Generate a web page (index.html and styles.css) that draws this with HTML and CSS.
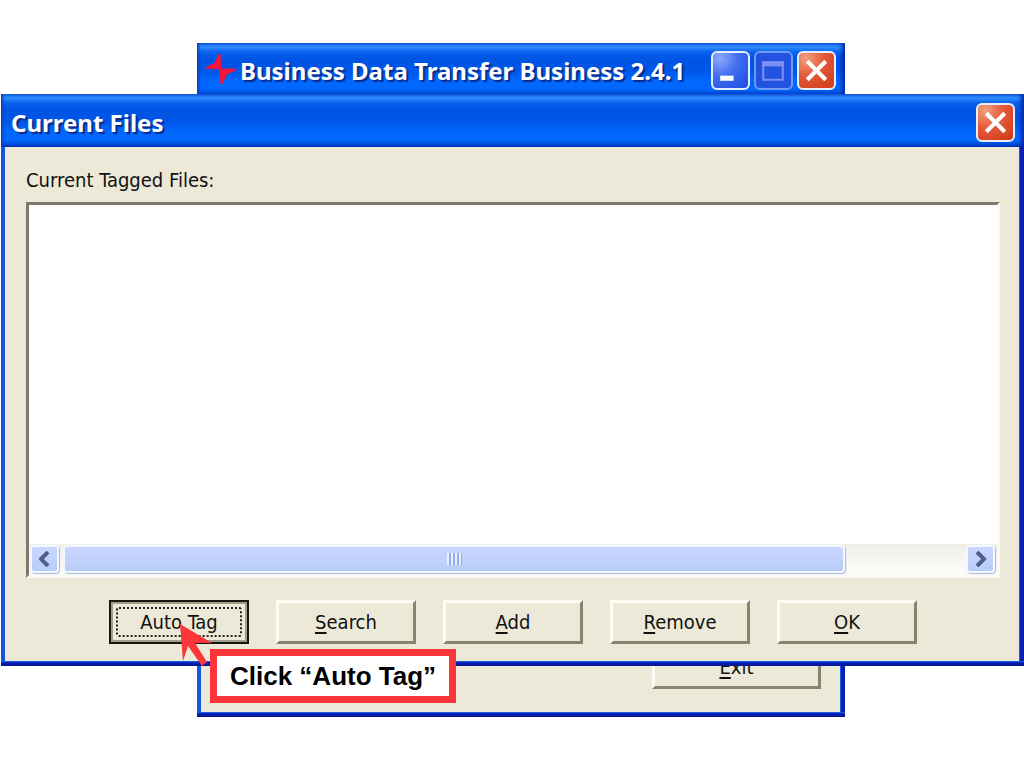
FILE: index.html
```html
<!DOCTYPE html>
<html lang="en">
<head>
  <meta charset="UTF-8" />
  <meta name="viewport" content="width=device-width, initial-scale=1.0"/>
  <title>Business Data Transfer Business 2.4.1</title>
  <link rel="stylesheet" href="styles.css">
</head>
<body>
  <main class="desktop">

    <section class="window main-window">
      <header class="title-bar">
        <svg class="logo" viewBox="0 0 32 32" aria-hidden="true">
          <path d="M0 15 L10 10 L14 1 L16 1 L17 16 L32 16 L32 18 L23 22 L18 32 L16 32 L15 17 L0 16 Z" fill="#f5143c"/>
        </svg>
        <h1>Business Data Transfer Business 2.4.1</h1>
        <button class="caption-btn" aria-label="Minimize">
          <svg viewBox="0 0 34 34"><path d="M7 22h13v5H7z" fill="#fff"/></svg>
        </button>
        <button class="caption-btn disabled" aria-label="Maximize" disabled>
          <svg viewBox="0 0 34 34"><path d="M7 9h19v17H7z" fill="none" stroke="#7a90f4" stroke-width="2"/><path d="M6 8h21v5H6z" fill="#7a90f4"/></svg>
        </button>
        <button class="caption-btn close" aria-label="Close">
          <svg viewBox="0 0 34 34"><path d="M8 8l18 18M26 8L8 26" stroke="#fff" stroke-width="4"/></svg>
        </button>
      </header>
      <div class="window-body main-body">
        <button class="btn exit-btn"><u>E</u>xit</button>
      </div>
    </section>

    <section class="window dialog">
      <header class="title-bar dialog-bar">
        <h2>Current Files</h2>
        <button class="caption-btn close" aria-label="Close">
          <svg viewBox="0 0 34 34"><path d="M8 8l18 18M26 8L8 26" stroke="#fff" stroke-width="4"/></svg>
        </button>
      </header>
      <div class="window-body dialog-body">
        <p class="list-label" id="files-label">Current Tagged Files:</p>
        <div class="list-box">
          <div class="list-items" role="listbox" aria-labelledby="files-label" tabindex="0"></div>
          <div class="scrollbar">
            <button class="scroll-btn" aria-label="Scroll left">
              <svg viewBox="0 0 12 16"><path d="M9 1L2 8l7 7" fill="none" stroke="#4d6185" stroke-width="4"/></svg>
            </button>
            <div class="track">
              <div class="thumb"><span class="grip"></span></div>
            </div>
            <button class="scroll-btn" aria-label="Scroll right">
              <svg viewBox="0 0 12 16"><path d="M2 1l7 7l-7 7" fill="none" stroke="#4d6185" stroke-width="4"/></svg>
            </button>
          </div>
        </div>
        <div class="actions">
          <button class="btn default"><span>Auto Tag</span></button>
          <button class="btn"><u>S</u>earch</button>
          <button class="btn"><u>A</u>dd</button>
          <button class="btn"><u>R</u>emove</button>
          <button class="btn"><u>O</u>K</button>
        </div>
      </div>
    </section>

    <!-- tutorial hint -->
    <svg class="arrow" viewBox="0 0 34 46" aria-hidden="true">
      <path d="M1 1L33 20L16 20L28 39L23 43L9 23L4 38Z" fill="#fb363b"/>
    </svg>
    <div class="callout">Click “Auto Tag”</div>
  </main>
</body>
</html>
```
FILE: styles.css
```css
* { box-sizing:border-box; }
body { margin:0; background:#fff; color:#111; font-family:"DejaVu Sans Condensed","DejaVu Sans",sans-serif; font-size:20px; }
button { font:inherit; color:inherit; padding:0; }
h1, h2 { flex:1; margin:0; color:#fff; font-family:"Noto Sans",sans-serif; font-size:24px; line-height:32px; font-weight:bold; white-space:nowrap; text-shadow:2px 2px 1px #0a2a8c; }

.desktop { position:relative; min-height:100vh; overflow:hidden; }

/* windows */
.window { position:absolute; display:flex; flex-direction:column; background:linear-gradient(90deg, #1456e0 50%, #0a1fb4 50%); }
.window::after { content:""; position:absolute; left:0; right:0; bottom:0; height:5px; background:linear-gradient(#1c5ce4 1px, #0a24c0 1px, #06148c); }
.main-window { top:43px; left:197px; right:179px; height:674px; }
.dialog { top:94px; left:1px; right:0; }

.title-bar { display:flex; align-items:center; gap:9px; height:53px; padding:4px 9px 0 8px;
  background:linear-gradient(#1a6ae8 0, #2f8dff 4px, #0a62ee 9px, #0054e3 16px, #0056e8 28px, #0068ff 38px, #0068ff 46px, #0046d0 51px, #0a36b4 53px);
  box-shadow:inset 3px 0 3px -1px #0940c4, inset -4px 0 4px -1px #0426a8; }
.main-window .title-bar { padding-top:2px; gap:4px; }
.dialog-bar { padding-left:10px; }
.logo { width:31px; height:31px; margin-top:-5px; flex:none; }

.caption-btn { width:39px; height:39px; flex:none; border:2px solid #e8effc; border-radius:6px; background:radial-gradient(circle at 20% 15%, #8fa9fa, #3f6df0 45%, #1c4be0); }
.caption-btn svg { display:block; width:100%; }
.caption-btn.disabled { border-color:#6f9bf8; background:#2153e0; }
.caption-btn.close { background:radial-gradient(circle at 20% 15%, #f0a080, #e4583a 45%, #cc3c12); }

.window-body { flex:1; display:flex; flex-direction:column; margin:0 5px 5px 4px; background:#ece9d8; box-shadow:1px 0 0 #1c5ce4; }
.main-body { align-items:flex-end; justify-content:flex-end; padding:0 19px 23px; }

/* dialog content */
.dialog-body { padding:20px 19px 17px 21px; }
.list-label { margin:0 0 8px; line-height:27px; }
.list-box { display:flex; flex-direction:column; height:376px; border:3px solid; border-color:#7d7a6c #fbfaf2 #fbfaf2 #7d7a6c; background:#fff; }
.list-items { flex:1; outline:none; }
.scrollbar { display:flex; gap:4px; height:31px; padding:1px 2px 1px 1px; background:linear-gradient(#f0eee8, #fdfdfc); }
.scroll-btn, .thumb { border:2px solid #f3f8ff; border-radius:4px; background:linear-gradient(#cad6ff, #b8cdfa); box-shadow:1px 1px 1px #a3b9df; }
.scroll-btn { display:flex; align-items:center; justify-content:center; width:29px; height:28px; flex:none; }
.scroll-btn svg { width:12px; height:16px; }
.track { flex:1; display:flex; }
.thumb { display:flex; align-items:center; justify-content:center; width:87%; height:28px; }
.grip { width:15px; height:12px; background:repeating-linear-gradient(90deg, #eaf0ff 0 2px, #8fadf0 2px 4px); }

.actions { display:flex; justify-content:center; gap:27px; margin-top:22px; }
.btn { width:140px; height:44px; border:3px solid; border-color:#fdfcf5 #87846f #87846f #fdfcf5; background:#ece9d8; line-height:24px; }
.btn u { text-decoration-thickness:2px; text-underline-offset:3px; }
.btn.default { padding:5px; border:2px solid #17170f; box-shadow:inset 0 0 0 2px #a09d8b; }
.btn.default span { display:block; height:30px; padding-top:1px; border:2px dotted #222; border-radius:3px; }
.exit-btn { width:169px; }

/* hint */
.arrow { position:absolute; top:623px; left:179px; width:34px; height:46px; }
.callout { position:absolute; top:649px; left:210px; padding:0 13px; border:7px solid #fb363b; background:#fff; color:#000; font:bold 26px/40px "Liberation Sans",Arial,sans-serif; }
```
